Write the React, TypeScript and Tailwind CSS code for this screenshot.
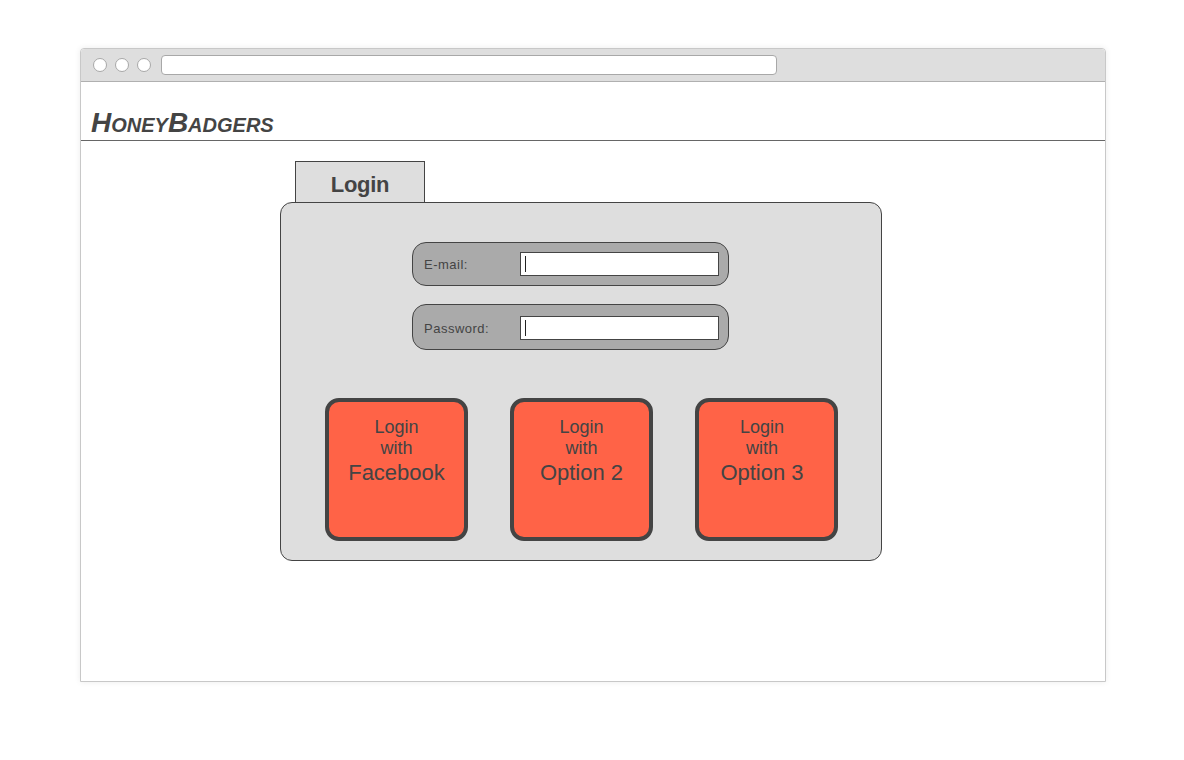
import React from 'react';

const OPTIONS = [
  { id: 'facebook', name: 'Facebook', shift: '' },
  { id: 'option-2', name: 'Option 2', shift: '' },
  { id: 'option-3', name: 'Option 3', shift: 'pr-[9px]' },
];

function FieldRow({ label, tall }: { label: string; tall?: boolean }) {
  return (
    <div
      className={`flex items-center w-[317px] ${tall ? 'h-[46px] pt-[1px]' : 'h-[44px]'} bg-[#aaaaaa] border border-[#444] rounded-[14px] pl-[11px] pr-[9px]`}
    >
      <span className="w-[96px] pt-[2px] text-[13px] text-[#444] tracking-[0.5px]">{label}</span>
      <div className="flex-1 h-[24px] bg-white border border-[#444] flex items-center pl-[4px]">
        <div className="w-px h-[16px] bg-[#222]" />
      </div>
    </div>
  );
}

export default function App() {
  return (
    <div className="w-[1184px] h-[760px] bg-white pt-[48px] pl-[80px] font-['Liberation_Sans',Arial,sans-serif]">
      <div className="w-[1026px] h-[634px] border border-[#c8c8c8] rounded-t-[4px] shadow-[0_0_6px_rgba(0,0,0,0.08)] flex flex-col bg-white">
        {/* title bar */}
        <div className="h-[33px] bg-[#dedede] border-b border-[#b0b0b0] rounded-t-[4px] flex items-center pl-[12px] gap-[8px]">
          <div className="w-[14px] h-[14px] rounded-full bg-white border border-[#a8a8a8]" />
          <div className="w-[14px] h-[14px] rounded-full bg-white border border-[#a8a8a8]" />
          <div className="w-[14px] h-[14px] rounded-full bg-white border border-[#a8a8a8]" />
          <div className="ml-[2px] w-[616px] h-[20px] bg-white border border-[#a8a8a8] rounded-[4px]" />
        </div>

        {/* header */}
        <div className="h-[59px] border-b border-[#666] flex items-end pl-[10px] pb-[0px]">
          <h1 className="text-[28px] leading-[34px] font-bold italic text-[#444] [font-variant:small-caps]">HoneyBadgers</h1>
        </div>

        {/* login card */}
        <div className="pl-[199px] pt-[20px]">
          <div className="ml-[15px] w-[130px] h-[42px] bg-[#dedede] border border-b-0 border-[#444] flex items-center justify-center pt-[3px]">
            <span className="text-[22px] font-bold text-[#444] tracking-[-0.3px]">Login</span>
          </div>
          <div className="w-[602px] h-[359px] -mt-px bg-[#dedede] border border-[#444] rounded-[12px] flex flex-col">
            <div className="flex flex-col gap-[18px] pl-[131px] pt-[39px]">
              <FieldRow label="E-mail:" />
              <FieldRow label="Password:" tall />
            </div>
            <div className="flex gap-[42px] pl-[44px] pt-[48px]">
              {OPTIONS.map(o => (
                <button
                  key={o.id}
                  className={`w-[143px] h-[143px] bg-[#ff6347] border-4 border-[#444] rounded-[14px] flex flex-col items-center justify-start pt-[15px] text-[#444] ${o.shift}`}
                >
                  <span className="text-[18px] leading-[21px]">Login</span>
                  <span className="text-[18px] leading-[21px]">with</span>
                  <span className="text-[22px] leading-[27px]">{o.name}</span>
                </button>
              ))}
            </div>
          </div>
        </div>
      </div>
    </div>
  );
}
